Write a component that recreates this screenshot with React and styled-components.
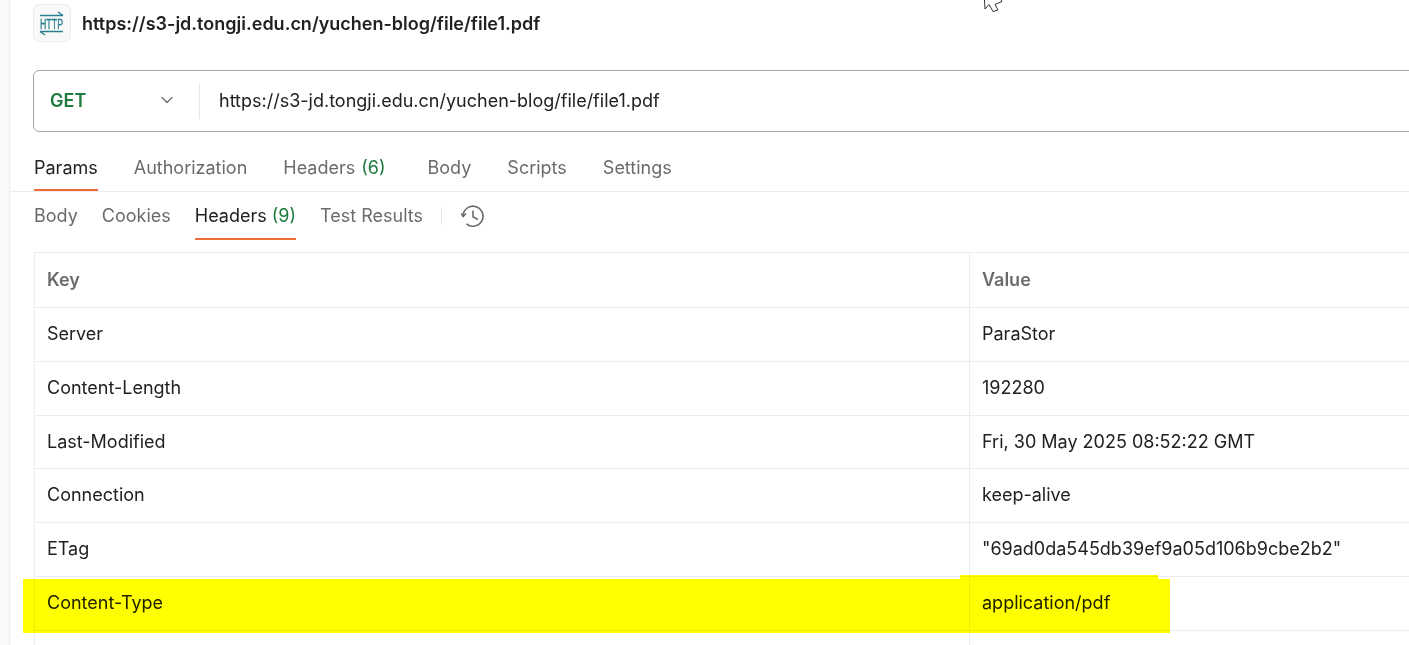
import styled, { createGlobalStyle } from "styled-components";
import { ChevronDown } from "lucide-react";

const GlobalStyle = createGlobalStyle`
  html, body {
    margin: 0;
    padding: 0;
    background: #fff;
    overflow: hidden;
  }
  body {
    font-family: Inter, "Noto Sans", sans-serif;
    color: #212121;
  }
`;

const Page = styled.div`
  position: relative;
  width: 1409px;
  height: 645px;
  overflow: hidden;
  display: flex;
`;

const SideStrip = styled.div`
  width: 9px;
  flex: none;
  background: #f9f9f9;
  border-right: 1px solid #ededed;
`;

const Main = styled.div`
  flex: 1;
  min-width: 0;
  display: flex;
  flex-direction: column;
  & > * {
    flex: none;
  }
`;

const TitleRow = styled.div`
  display: flex;
  align-items: center;
  gap: 11px;
  margin-top: 4px;
  padding-left: 23px;
  height: 38px;
`;

const IconTile = styled.div`
  width: 38px;
  height: 38px;
  box-sizing: border-box;
  border: 1px solid #ededed;
  border-radius: 6px;
  background: #f9f9f9;
  display: flex;
  align-items: center;
  justify-content: center;
`;

const Title = styled.div`
  font-size: 18px;
  font-weight: 600;
  color: #212121;
  white-space: nowrap;
`;

const UrlBar = styled.div`
  margin: 28px -20px 0 23px;
  height: 62px;
  box-sizing: border-box;
  border: 1px solid #a6a6a6;
  border-radius: 6px;
  display: flex;
  align-items: center;
`;

const Method = styled.div`
  width: 166px;
  height: 36px;
  flex: none;
  box-sizing: border-box;
  padding: 0 22px 2px 16px;
  border-right: 1px solid #e6e6e6;
  display: flex;
  align-items: center;
  justify-content: space-between;
  font-size: 18px;
  font-weight: 600;
  color: #1f7a3d;
`;

const UrlText = styled.div`
  padding: 0 0 2px 19px;
  font-size: 18px;
  color: #212121;
  white-space: nowrap;
`;

const RequestTabs = styled.div`
  margin-top: 17px;
  height: 43px;
  box-sizing: border-box;
  padding-left: 24px;
  display: flex;
  border-bottom: 1px solid #ededed;
`;

const ResponseTabs = styled.div`
  height: 48px;
  padding-left: 24px;
  display: flex;
  align-items: stretch;
`;

const Tab = styled.div`
  height: ${(p) => p.$height}px;
  margin-right: ${(p) => p.$gap}px;
  padding-bottom: ${(p) => p.$lift || 0}px;
  box-sizing: border-box;
  display: flex;
  align-items: center;
  gap: ${(p) => p.$inner || 6}px;
  font-size: 18px;
  white-space: nowrap;
  color: ${(p) => (p.$active ? "#212121" : "#6b6b6b")};
  border-bottom: 2px solid ${(p) => (p.$active ? "#f26b3a" : "transparent")};
`;

const Count = styled.span`
  color: #1f7a3d;
`;

const TabDivider = styled.div`
  width: 1px;
  height: 18px;
  margin: 15px 19px 0 0;
  background: #e6e6e6;
`;

const HistoryButton = styled.div`
  height: 48px;
  display: flex;
  align-items: center;
`;

const Table = styled.div`
  margin: 12px -20px 0 24px;
  border: 1px solid #ededed;
  border-bottom: none;
`;

const Row = styled.div`
  display: grid;
  grid-template-columns: 934px 1fr;
  height: ${(p) => p.$height || 54}px;
  box-sizing: border-box;
  border-bottom: 1px solid #ededed;
`;

const Cell = styled.div`
  display: flex;
  align-items: center;
  padding: 0 0 2px 12px;
  font-size: 18px;
  font-weight: ${(p) => (p.$head ? 600 : 400)};
  color: ${(p) => (p.$head ? "#6b6b6b" : "#212121")};
  white-space: nowrap;
  & + & {
    border-left: 1px solid #ededed;
  }
`;

const Highlight = styled.div`
  position: absolute;
  background: #ffff00;
  mix-blend-mode: multiply;
  left: ${(p) => p.$x}px;
  top: ${(p) => p.$y}px;
  width: ${(p) => p.$w}px;
  height: ${(p) => p.$h}px;
`;

const Cursor = styled.svg`
  position: absolute;
  left: 984px;
  top: 0;
`;

const rows = [
  ["Server", "ParaStor"],
  ["Content-Length", "192280"],
  ["Last-Modified", "Fri, 30 May 2025 08:52:22 GMT", 53],
  ["Connection", "keep-alive"],
  ["ETag", '"69ad0da545db39ef9a05d106b9cbe2b2"'],
  ["Content-Type", "application/pdf"],
];

const url = "https://s3-jd.tongji.edu.cn/yuchen-blog/file/file1.pdf";

function HttpIcon() {
  return (
    <svg width="28" height="28" viewBox="0 0 28 28" fill="none" stroke="#2b7f8f">
      <path d="M2 6.5h23M20 3l5 3.5" strokeWidth="1.5" />
      <path d="M2 22.5h23M2 22.5l5 3.5" strokeWidth="1.5" />
      <text
        transform="translate(2 19.5) scale(0.63 1)"
        fontSize="14"
        fontFamily="'Liberation Sans', sans-serif"
        fill="#2b7f8f"
        stroke="#2b7f8f"
        strokeWidth="0.3"
      >
        HTTP
      </text>
    </svg>
  );
}

function HistoryIcon() {
  return (
    <svg width="24" height="24" viewBox="0 0 24 24" fill="none" stroke="#6b6b6b" strokeWidth="1.6">
      <path d="M2 12.5A10 10 0 1 1 5.5 19.8" />
      <path d="M0 9.5l2.2 3 2.8-3" />
      <path d="M12 6.5v6.2l4.8 2.8" />
    </svg>
  );
}

export default function App() {
  return (
    <Page>
      <GlobalStyle />
      <SideStrip />
      <Main>
        <TitleRow>
          <IconTile>
            <HttpIcon />
          </IconTile>
          <Title>{url}</Title>
        </TitleRow>
        <UrlBar>
          <Method>
            GET
            <ChevronDown size={20} color="#6b6b6b" strokeWidth={1.5} />
          </Method>
          <UrlText>{url}</UrlText>
        </UrlBar>
        <RequestTabs>
          <Tab $active $height={42} $lift={4} $gap={36}>Params</Tab>
          <Tab $height={42} $lift={4} $gap={36}>Authorization</Tab>
          <Tab $height={42} $lift={4} $gap={42}>
            Headers <Count>(6)</Count>
          </Tab>
          <Tab $height={42} $lift={4} $gap={36}>Body</Tab>
          <Tab $height={42} $lift={4} $gap={36}>Scripts</Tab>
          <Tab $height={42} $lift={4} $gap={36}>Settings</Tab>
        </RequestTabs>
        <ResponseTabs>
          <Tab $height={48} $gap={24}>Body</Tab>
          <Tab $height={48} $gap={24}>Cookies</Tab>
          <Tab $active $height={48} $gap={24} $inner={5}>
            Headers <Count>(9)</Count>
          </Tab>
          <Tab $height={48} $gap={18}>Test Results</Tab>
          <TabDivider />
          <HistoryButton>
            <HistoryIcon />
          </HistoryButton>
        </ResponseTabs>
        <Table>
          <Row $height={55}>
            <Cell $head>Key</Cell>
            <Cell $head>Value</Cell>
          </Row>
          {rows.map(([key, value, height]) => (
            <Row key={key} $height={height}>
              <Cell>{key}</Cell>
              <Cell>{value}</Cell>
            </Row>
          ))}
          <Row>
            <Cell />
            <Cell />
          </Row>
        </Table>
      </Main>
      <Highlight $x={23} $y={579} $w={1147} $h={54} />
      <Highlight $x={960} $y={575} $w={198} $h={4} />
      <Cursor width="19" height="12" viewBox="0 0 19 12" fill="#fff" stroke="#333" strokeWidth="1">
        <path d="M0.5 0L1 9L5 4.5L9 11.5L14 10L11 4.5L18 1.5L17 0" />
      </Cursor>
    </Page>
  );
}
